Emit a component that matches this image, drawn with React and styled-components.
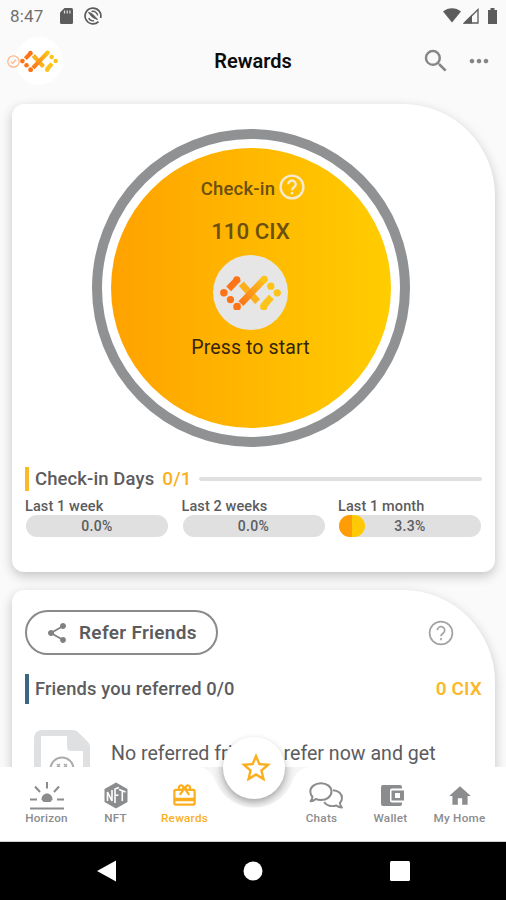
import React from 'react';
import styled, { createGlobalStyle } from 'styled-components';
import {
  MdSearch,
  MdMoreHoriz,
  MdShare,
  MdHome,
  MdStarBorder,
  MdOutlineCardGiftcard,
} from 'react-icons/md';

const GlobalStyle = createGlobalStyle`
  * {
    box-sizing: border-box;
  }

  body {
    margin: 0;
    font-family: Roboto, "Liberation Sans", sans-serif;
    color: #5c5c5e;
  }

  svg {
    display: block;
    flex-shrink: 0;
  }
`;

const Screen = styled.div`
  width: 506px;
  height: 900px;
  display: flex;
  flex-direction: column;
  overflow: hidden;
  background: #fafafa;
`;

const StatusBar = styled.div`
  height: 32px;
  display: flex;
  align-items: center;
  justify-content: space-between;
  padding: 0 8px 0 10px;
  color: #6f6f6f;
`;

const StatusGroup = styled.div`
  display: flex;
  align-items: center;
`;

const Clock = styled.span`
  width: 50px;
  font-size: 17px;
  line-height: 20px;
  letter-spacing: 0.2px;
`;

const SdIcon = styled.svg`
  margin-right: 11px;
`;

const Header = styled.div`
  height: 58px;
  display: grid;
  grid-template-columns: 1fr auto 1fr;
  align-items: center;
  padding: 0 7px;
`;

const Brand = styled.div`
  display: flex;
  align-items: center;
`;

const VerifiedIcon = styled.svg`
  position: relative;
  z-index: 1;
`;

const BrandDisc = styled.div`
  width: 48px;
  height: 48px;
  margin-left: -5px;
  border-radius: 50%;
  background: #fff;
  display: flex;
  align-items: center;
  justify-content: center;
`;

const Title = styled.h1`
  margin: 0;
  color: #0c0c0c;
  font-size: 20px;
  font-weight: 600;
  line-height: 24px;
`;

const Actions = styled.div`
  display: flex;
  align-items: center;
  justify-content: flex-end;
  gap: 14px;
  margin-right: 6px;
  color: #868686;
`;

const Content = styled.div`
  flex: 1;
  min-height: 0;
  overflow: hidden;
  display: flex;
  flex-direction: column;
  gap: 18px;
  padding: 14px 11px 0 12px;
`;

const Card = styled.section`
  flex-shrink: 0;
  height: ${({ $height }) => $height}px;
  padding: ${({ $padding }) => $padding};
  background: #fff;
  border-radius: 12px 92px 12px 12px;
  box-shadow: 0 4px 12px rgba(0, 0, 0, 0.22);
`;

const Ring = styled.div`
  width: 318px;
  height: 318px;
  margin: 0 auto 20px 67px;
  border: 10px solid #8f9193;
  border-radius: 50%;
  padding: 9px;
`;

const CheckInButton = styled.button`
  width: 100%;
  height: 100%;
  padding: 26px 1px 0 0;
  border: 0;
  border-radius: 50%;
  background: linear-gradient(90deg, #ffa200, #ffcd00);
  font-family: inherit;
  display: flex;
  flex-direction: column;
  align-items: center;
`;

const CheckInLabel = styled.div`
  height: 26px;
  display: flex;
  align-items: center;
  gap: 4px;
  margin-left: 5px;
  color: #6b5011;
  font-size: 18.5px;
  font-weight: 500;
  letter-spacing: 0.2px;

  span {
    padding-top: 4px;
  }

  svg {
    color: #f5ead0;
  }
`;

const Amount = styled.div`
  margin-top: 18px;
  color: #6b5011;
  font-size: 22.3px;
  font-weight: 500;
  line-height: 26px;
`;

const LogoDisc = styled.div`
  width: 75px;
  height: 75px;
  margin-top: 11px;
  border-radius: 50%;
  background: #e6e6e6;
  display: flex;
  align-items: center;
  justify-content: center;
`;

const Hint = styled.div`
  margin-top: 6px;
  color: #33260a;
  font-size: 19.5px;
  line-height: 24px;
  letter-spacing: 0.12px;
`;

const DaysRow = styled.div`
  height: 24px;
  display: flex;
  align-items: center;
  padding: 0 0 1px 6px;
  border-left: 4px solid #fbb829;
  font-size: 18.5px;
  font-weight: 500;
  letter-spacing: 0.1px;
`;

const DaysValue = styled.span`
  margin: 0 7px 0 8px;
  color: #fbb01f;
  font-size: 19px;
`;

const Rule = styled.div`
  flex: 1;
  height: 4px;
  border-radius: 2px;
  background: #e0e0e0;
`;

const Periods = styled.div`
  display: grid;
  grid-template-columns: repeat(3, 142px);
  gap: 14.5px;
  margin: 7px 0 0 1px;
`;

const PeriodName = styled.div`
  margin-left: -1px;
  font-size: 14.5px;
  font-weight: 500;
  line-height: 18px;
  letter-spacing: 0.1px;
`;

const Track = styled.div`
  height: 22px;
  margin-top: -1px;
  border-radius: 11px;
  background: #e0e0e0;
  display: grid;
  align-items: center;
`;

const Fill = styled.div`
  grid-area: 1 / 1;
  height: 22px;
  width: 26px;
  border-radius: 11px;
  background: linear-gradient(90deg, #ff9c06 0 50%, #ffc905 50%);
`;

const Percent = styled.div`
  grid-area: 1 / 1;
  text-align: center;
  font-size: 14px;
  font-weight: 500;
  letter-spacing: 0.3px;
`;

const ReferHeader = styled.div`
  display: flex;
  align-items: center;
  justify-content: space-between;
  padding-right: 28px;
  color: #a3a3a3;
`;

const ReferButton = styled.button`
  width: 193px;
  height: 45px;
  padding: 0 0 0 18px;
  border: 2px solid #8a8a8c;
  border-radius: 23px;
  background: #fff;
  color: #5c5c5e;
  font-family: inherit;
  font-size: 19px;
  font-weight: 600;
  letter-spacing: 0.3px;
  display: flex;
  align-items: center;
  gap: 10px;

  svg {
    color: #808082;
  }
`;

const ReferredRow = styled.div`
  height: 30px;
  margin-top: 19px;
  padding: 0 0 2px 6px;
  border-left: 4px solid #3b6880;
  display: flex;
  align-items: center;
  justify-content: space-between;
  font-size: 18.3px;
  font-weight: 500;
  letter-spacing: 0.13px;
`;

const Earned = styled.span`
  color: #fbb829;
  font-size: 19px;
  font-weight: 600;
`;

const EmptyRow = styled.div`
  display: flex;
  margin-top: 26px;
  padding-left: 9px;
`;

const EmptyText = styled.div`
  margin: 11px 0 0 21px;
  font-size: 19.6px;
  line-height: 26px;
  white-space: nowrap;
`;

const TabBar = styled.nav`
  position: relative;
  height: 75px;
  background: #fff;
  display: grid;
  grid-template-columns: 12px repeat(3, 69px) 68px repeat(3, 69px);
  border-bottom: 1px solid #cfcfcf;
`;

const Notch = styled.svg`
  position: absolute;
  left: 193px;
  top: 0;
`;

const Fab = styled.button`
  position: absolute;
  left: 223px;
  top: -30px;
  width: 62px;
  height: 62px;
  padding: 0 0 0 3px;
  border: 0;
  border-radius: 50%;
  background: #fff;
  color: #fbaf1e;
  box-shadow: 0 3px 7px rgba(0, 0, 0, 0.28);
  display: flex;
  align-items: center;
  justify-content: center;
`;

const Tab = styled.div`
  grid-column: ${({ $column }) => $column};
  display: flex;
  flex-direction: column;
  align-items: center;
  padding-top: 14px;
  color: ${({ $active }) => ($active ? '#fbaf1e' : '#8a8c8e')};
`;

const TabIcon = styled.div`
  height: 29px;
  display: flex;
  align-items: center;
  padding-left: ${({ $shift = 0 }) => $shift}px;
`;

const TabLabel = styled.div`
  font-size: 11.7px;
  font-weight: 500;
  line-height: 16px;
  letter-spacing: 0.25px;
  white-space: nowrap;
`;

const SystemNav = styled.div`
  height: 58px;
  background: #000;
  display: flex;
  align-items: center;
  justify-content: space-between;
  padding: 0 96px 0 97px;
`;

const Logo = ({ width, id }) => (
  <svg width={width} height={width * 0.59} viewBox="0 0 60 35">
    <defs>
      <linearGradient id={id} gradientUnits="userSpaceOnUse" x1="20" y1="28" x2="45" y2="3">
        <stop offset="0" stopColor="#fd7416" />
        <stop offset="0.5" stopColor="#fb9d1c" />
        <stop offset="1" stopColor="#fcc419" />
      </linearGradient>
    </defs>
    <g strokeWidth="6.6" fill="none">
      <path d="M8.500 13.500 18 3.500" stroke="#fd7416" />
      <path d="M21 8.500 37 26" stroke="#fcb01c" />
      <path d="M20.500 28 43 4.500" stroke={`url(#${id})`} />
      <path d="M42.500 30.500 50.500 21.500" stroke="#fcc419" />
    </g>
    <g fill="#fd7416">
      <circle cx="16.500" cy="4.500" r="3.500" />
      <circle cx="3.800" cy="17.300" r="3.700" />
      <circle cx="10.300" cy="24" r="3.600" />
      <circle cx="16.800" cy="31" r="3.800" />
    </g>
    <g fill="#fcc419">
      <circle cx="43.500" cy="4" r="3.500" />
      <circle cx="43" cy="31" r="3.600" />
      <circle cx="50" cy="10.800" r="3.600" />
      <circle cx="56.300" cy="17.300" r="3.600" />
    </g>
  </svg>
);

const Verified = () => (
  <VerifiedIcon width="13" height="13" viewBox="0 0 13 13" fill="none" stroke="#fbb68a">
    <circle cx="6.5" cy="6.5" r="5.700" strokeWidth="1.2" />
    <path d="M4 6.700 5.800 8.400 9 4.800" strokeWidth="1.3" />
  </VerifiedIcon>
);

const HelpIcon = ({ stroke }) => (
  <svg width="26" height="26" viewBox="0 0 26 26" fill="none" stroke="currentColor" strokeWidth={stroke}>
    <circle cx="13" cy="13" r="11.400" />
    <path d="M9.300 10.300a3.700 3.700 0 1 1 5.800 3c-1.400 1-2.100 1.500-2.100 3M13 18v2.200" />
  </svg>
);

const HorizonIcon = () => (
  <svg width="34" height="28" viewBox="0 0 34 28" stroke="currentColor" strokeWidth="2">
    <path d="M17 0v6.500M5 4.500l5 5.500M29 4.500l-5 5.500M0 17.500h7M27 17.500h7M0 26.500h34" />
    <path d="M11.500 17.500c0-3.500 2.500-6 5.500-6s5.500 2.500 5.500 6l-2 2.500h-7z" fill="currentColor" stroke="none" />
  </svg>
);

const NftIcon = () => (
  <svg width="24" height="27" viewBox="0 0 24 27">
    <path d="M12 .5 23.500 7v13L12 26.500.5 20V7z" fill="currentColor" />
    <g stroke="#fff" strokeWidth="1.600" fill="none">
      <path d="M3.500 19V10l4.500 9V8" />
      <path d="M11 21V7l4-1.500M11 13.500l3.500-.5" />
      <path d="M15 7.500l6.500 2.500M18.300 9v10" />
    </g>
  </svg>
);

const ChatsIcon = () => (
  <svg width="35" height="28" viewBox="0 0 35 28" fill="none" stroke="currentColor" strokeWidth="2" strokeLinejoin="round">
    <path d="M12 1.200c6 0 10.500 3.600 10.500 8.400S18 18 12 18c-2 0-3.800-.4-5.300-1.100C5.300 18.200 3.500 19.200 1.500 19.300c1-1.200 1.700-2.500 1.900-4.500C2 13.300 1.300 11.600 1.300 9.600 1.300 4.800 6 1.200 12 1.200z" />
    <path d="M24 8.200c5 .2 9 3.500 9 7.800 0 2-.8 3.700-2.100 5 .2 2 .9 3.400 2 4.600-2.200-.1-4-.9-5.500-2.100-4.700 1.400-9.800.2-12.300-3.300" />
  </svg>
);

const WalletIcon = () => (
  <svg width="23" height="21" viewBox="0 0 23 21" fill="currentColor">
    <path d="M2 0h17a2 2 0 0 1 2 2v1.500H11a2 2 0 0 0-2 2v10a2 2 0 0 0 2 2h10V19a2 2 0 0 1-2 2H2a2 2 0 0 1-2-2V2a2 2 0 0 1 2-2z" />
    <path fillRule="evenodd" d="M10.500 5.500H23v10H10.500zM14 8v5h5V8z" />
  </svg>
);

const EmptyFile = () => (
  <svg width="56" height="72" viewBox="0 0 56 72">
    <path
      fillRule="evenodd"
      fill="#dfe0e1"
      d="M8 0h31q3 0 5 2l10 10q2 2 2 5v47a8 8 0 0 1-8 8H8a8 8 0 0 1-8-8V8a8 8 0 0 1 8-8zM7 6v59h42V21H37a4 4 0 0 1-4-4V6z"
    />
    <g fill="none" stroke="#aaabad" strokeWidth="2">
      <circle cx="28" cy="39" r="11.500" />
      <path d="M23 34l3 3M26 34l-3 3M30 34l3 3M33 34l-3 3" strokeWidth="1.500" />
    </g>
  </svg>
);

const periods = [
  { name: 'Last 1 week', value: '0.0%' },
  { name: 'Last 2 weeks', value: '0.0%' },
  { name: 'Last 1 month', value: '3.3%', filled: true },
];

const tabs = [
  { name: 'Horizon', column: 2, icon: <HorizonIcon /> },
  { name: 'NFT', column: 3, icon: <NftIcon /> },
  { name: 'Rewards', column: 4, icon: <MdOutlineCardGiftcard size={27} />, active: true },
  { name: 'Chats', column: 6, icon: <ChatsIcon />, shift: 9 },
  { name: 'Wallet', column: 7, icon: <WalletIcon />, shift: 3 },
  { name: 'My Home', column: 8, icon: <MdHome size={26} />, shift: 1 },
];

const Status = () => (
  <StatusBar>
    <StatusGroup>
      <Clock>8:47</Clock>
      <SdIcon width="13" height="16" viewBox="0 0 13 16">
        <path d="M4.500 0H11.500A1.500 1.500 0 0 1 13 1.500v13a1.500 1.500 0 0 1-1.500 1.500h-10A1.500 1.500 0 0 1 0 14.500V4.500z" fill="#5c5c5c" />
        <path d="M4.500 2.500v3M7.200 2.500v3M9.900 2.500v3" stroke="#ddd" strokeWidth="1.200" />
      </SdIcon>
      <svg width="18" height="18" viewBox="0 0 18 18" fill="none" stroke="#5c5c5c">
        <path d="M14.500 14.600A7.900 7.900 0 1 1 16.600 11" strokeWidth="1.700" />
        <path d="M4.700 11A4.800 4.800 0 0 0 10 13.700M7.500 4.500A4.800 4.800 0 0 1 13.700 8.500" strokeWidth="1.400" />
        <path d="M4.500 5.500Q8 5.500 13.500 12.500Q8 11.500 4.500 5.500z" fill="#5c5c5c" />
      </svg>
    </StatusGroup>
    <StatusGroup>
      <svg width="55" height="16" viewBox="0 0 55 16" fill="#5c5c5c">
        <path d="M0 3.500C5-1 13-1 18 3.500L9 14.500z" />
        <path d="M21.500 15 35 1.500V15z" fill="none" stroke="#5c5c5c" strokeWidth="1.300" />
        <path d="M20 15.600 29 6.500v9.100z" />
        <path d="M45 2h2.500V0h4v2H54v14h-9z" />
      </svg>
    </StatusGroup>
  </StatusBar>
);

const Period = ({ name, value, filled }) => (
  <div>
    <PeriodName>{name}</PeriodName>
    <Track>
      {filled && <Fill />}
      <Percent>{value}</Percent>
    </Track>
  </div>
);

const CheckInCard = () => (
  <Card $height={468} $padding="25px 13px 0">
    <Ring>
      <CheckInButton>
        <CheckInLabel>
          <span>Check-in</span>
          <HelpIcon stroke={2.4} />
        </CheckInLabel>
        <Amount>110 CIX</Amount>
        <LogoDisc>
          <Logo width={61} id="check-in-logo" />
        </LogoDisc>
        <Hint>Press to start</Hint>
      </CheckInButton>
    </Ring>
    <DaysRow>
      Check-in Days
      <DaysValue>0/1</DaysValue>
      <Rule />
    </DaysRow>
    <Periods>
      {periods.map((period) => <Period key={period.name} {...period} />)}
    </Periods>
  </Card>
);

const ReferCard = () => (
  <Card $height={260} $padding="20px 13px 0">
    <ReferHeader>
      <ReferButton>
        <MdShare size={24} />
        Refer Friends
      </ReferButton>
      <HelpIcon stroke={1.7} />
    </ReferHeader>
    <ReferredRow>
      Friends you referred 0/0
      <Earned>0 CIX</Earned>
    </ReferredRow>
    <EmptyRow>
      <EmptyFile />
      <EmptyText>No referred friends, refer now and get</EmptyText>
    </EmptyRow>
  </Card>
);

const Tabs = () => (
  <TabBar>
    <Notch width="122" height="44" viewBox="0 0 122 44">
      <defs>
        <radialGradient id="notch-shade" gradientUnits="userSpaceOnUse" cx="61" cy="1" r="42">
          <stop offset="0.7" stopColor="#e2e2e2" />
          <stop offset="1" stopColor="#f6f6f6" />
        </radialGradient>
      </defs>
      <path d="M6 0C15 1 20 7 23 15a41 41 0 0 0 76 0C102 7 107 1 116 0z" fill="url(#notch-shade)" />
    </Notch>
    {tabs.map(({ name, column, icon, active, shift }) => (
      <Tab key={name} $column={column} $active={active}>
        <TabIcon $shift={shift}>{icon}</TabIcon>
        <TabLabel>{name}</TabLabel>
      </Tab>
    ))}
    <Fab>
      <MdStarBorder size={36} />
    </Fab>
  </TabBar>
);

const App = () => (
  <>
    <GlobalStyle />
    <Screen>
      <Status />
      <Header>
        <Brand>
          <Verified />
          <BrandDisc>
            <Logo width={38} id="header-logo" />
          </BrandDisc>
        </Brand>
        <Title>Rewards</Title>
        <Actions>
          <MdSearch size={30} />
          <MdMoreHoriz size={28} />
        </Actions>
      </Header>
      <Content>
        <CheckInCard />
        <ReferCard />
      </Content>
      <Tabs />
      <SystemNav>
        <svg width="19" height="22" viewBox="0 0 19 22">
          <path d="M19 .5v21L0 11z" fill="#fff" />
        </svg>
        <svg width="20" height="20" viewBox="0 0 20 20">
          <circle cx="10" cy="10" r="9.500" fill="#fff" />
        </svg>
        <svg width="20" height="20" viewBox="0 0 20 20">
          <rect width="20" height="20" rx="1.500" fill="#fff" />
        </svg>
      </SystemNav>
    </Screen>
  </>
);

export default App;
